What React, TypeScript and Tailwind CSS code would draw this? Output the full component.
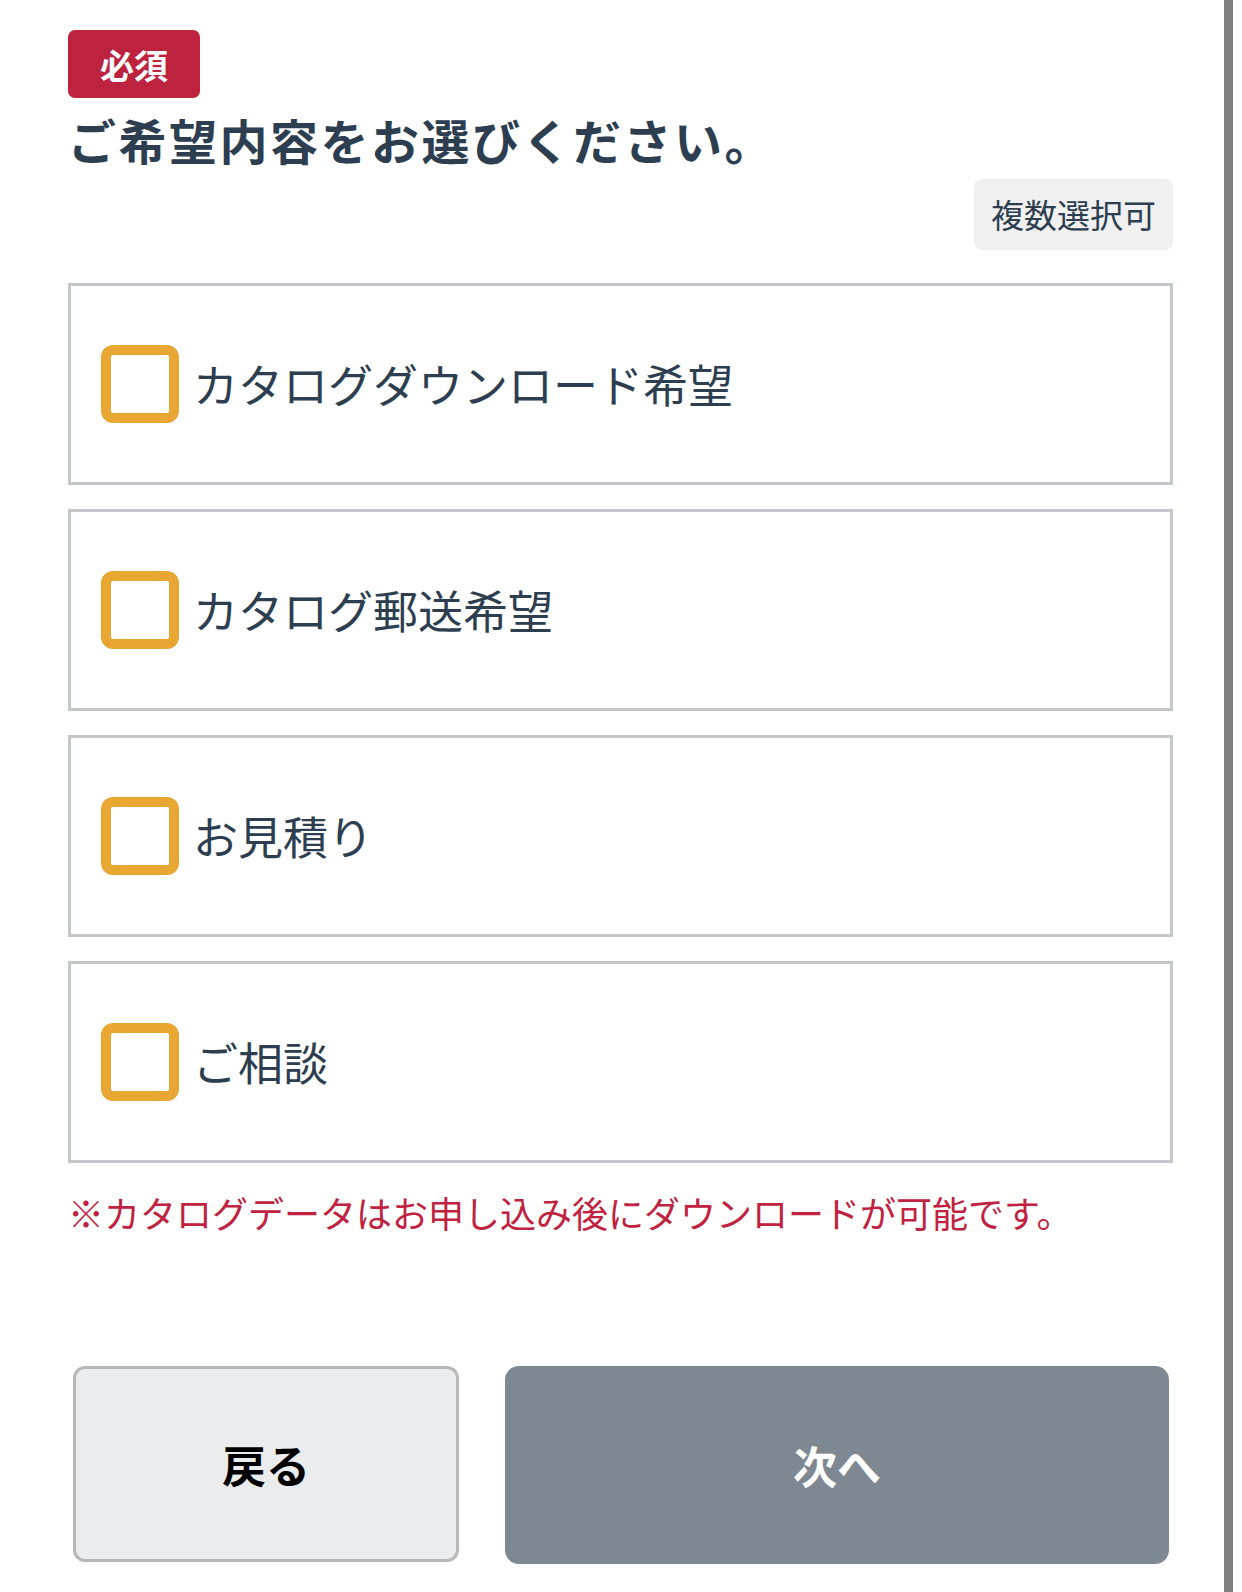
import React, { useState } from "react";

const OPTIONS = [
  { key: "download", label: "カタログダウンロード希望" },
  { key: "mail", label: "カタログ郵送希望" },
  { key: "estimate", label: "お見積り" },
  { key: "consult", label: "ご相談" },
];

export default function App() {
  const [checked, setChecked] = useState<string[]>([]);

  const toggle = (key: string) =>
    setChecked((prev) => (prev.includes(key) ? prev.filter((k) => k !== key) : [...prev, key]));

  return (
    <div
      className="flex min-h-[1592px] w-[1242px] bg-white text-[#2c3e50]"
      style={{ fontFamily: '"Noto Sans CJK JP", "Noto Sans", sans-serif' }}
    >
      <div className="flex w-[1224px] flex-col pl-[68px] pr-[51px] pt-[30px]">
        {/* Required badge + title */}
        <div className="flex">
          <span className="flex h-[68px] items-center rounded-[7px] bg-[#bd223f] px-[32px] text-[34px] font-bold text-white">
            必須
          </span>
        </div>
        <h1 className="mt-[13px] text-[48px] font-bold leading-[56px] tracking-[2.5px] text-[#2c3e50]">
          ご希望内容をお選びください。
        </h1>

        <div className="mt-[12px] flex justify-end">
          <span className="flex h-[71px] items-center rounded-[8px] bg-[#f0f0f1] px-[17px] text-[33px] text-[#2c3e50]">
            複数選択可
          </span>
        </div>

        {/* Options */}
        <div className="mt-[33px] flex flex-col gap-[24px]">
          {OPTIONS.map(({ key, label }) => (
            <button
              key={key}
              onClick={() => toggle(key)}
              className="flex h-[202px] items-center gap-[14px] border-[3px] border-[#c3c7cb] bg-white pl-[30px] text-left"
            >
              <span
                className={[
                  "h-[78px] w-[78px] shrink-0 rounded-[12px] border-[10px] border-[#e8a633]",
                  checked.includes(key) ? "bg-[#e8a633]" : "bg-white",
                ].join(" ")}
              />
              <span className="text-[45px] leading-[60px] text-[#2c3e50]">{label}</span>
            </button>
          ))}
        </div>

        <p className="mt-[24px] text-[36px] leading-[50px] text-[#c0223f]">
          ※カタログデータはお申し込み後にダウンロードが可能です。
        </p>

        {/* Buttons */}
        <div className="mt-[129px] flex gap-[46px] pl-[5px] pr-[4px]">
          <button className="flex h-[196px] w-[386px] items-center justify-center rounded-[12px] border-[3px] border-[#b8b8b8] bg-[#ebecee] text-[44px] font-bold text-black">
            戻る
          </button>
          <button className="flex h-[198px] flex-1 items-center justify-center rounded-[14px] bg-[#7d8893] text-[44px] font-bold text-white">
            次へ
          </button>
        </div>
      </div>
      <div className="w-[9px] self-stretch bg-[#808080]" />
      <div className="w-[9px]" />
    </div>
  );
}
